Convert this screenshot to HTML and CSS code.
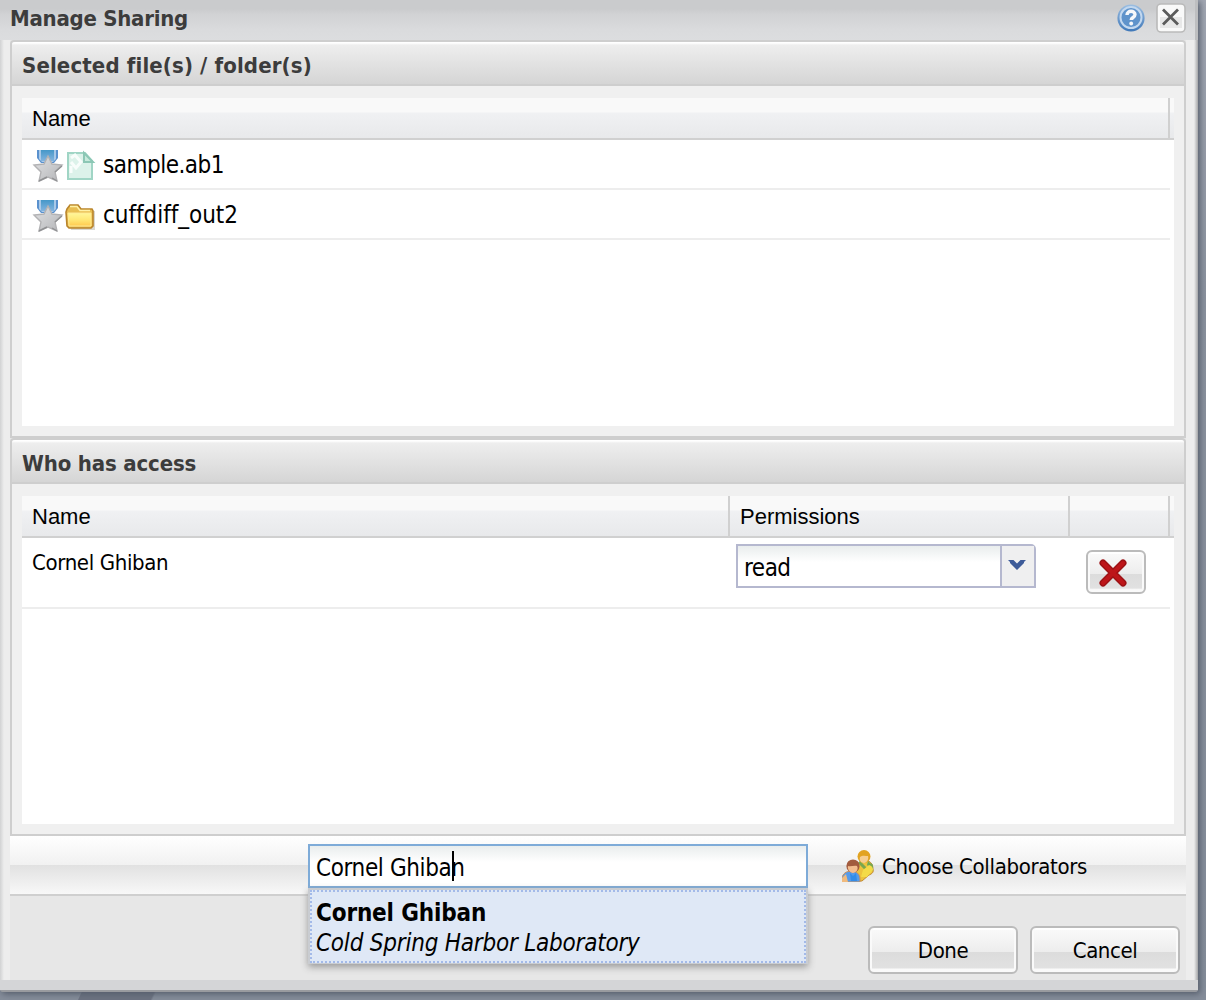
FILE: index.html
```html
<!DOCTYPE html>
<html lang="en">
<head>
<meta charset="utf-8">
<title>Manage Sharing</title>
<link rel="stylesheet" href="styles.css">
</head>
<body>
<svg class="defs" width="0" height="0" aria-hidden="true">
  <defs>
    <linearGradient id="silver" x1="0" y1="0" x2="1" y2="1"><stop offset="0" stop-color="#e2e2e4"/><stop offset=".5" stop-color="#cbccce"/><stop offset="1" stop-color="#b4b5b8"/></linearGradient>
    <linearGradient id="ribbon" x1="0" y1="0" x2="0" y2="1"><stop offset="0" stop-color="#4597c8"/><stop offset="1" stop-color="#83b4df"/></linearGradient>
    <linearGradient id="gold" x1="0" y1="0" x2="0" y2="1"><stop offset="0" stop-color="#fff79a"/><stop offset=".5" stop-color="#ffe877"/><stop offset="1" stop-color="#ffca4f"/></linearGradient>
    <linearGradient id="blue" x1="0" y1="0" x2="0" y2="1"><stop offset="0" stop-color="#9dbfe2"/><stop offset="1" stop-color="#3f78b9"/></linearGradient>
    <symbol id="medal" viewBox="0 0 32 32">
      <path d="M5 0h21v8l-4 5H9L5 8z" fill="#5a91ce"/>
      <path d="M7 0h17v9l-3 3H10L7 9z" fill="#a9c9e8"/>
      <path d="M9 0h13v11H9z" fill="url(#ribbon)"/>
      <path d="M16 6l4 8 10 1-7 7 2 9-9-4-9 4 2-9-7-7 10-1z" fill="url(#silver)" stroke="#b2b2b4" stroke-width="1.4"/>
      <path d="M7 31l8-4M25 31l-5-3M30 16l-7 6" fill="none" stroke="#909193" stroke-width="1.4"/>
    </symbol>
  </defs>
</svg>
<main class="window">
  <header class="titlebar">
    <h1 class="title">Manage Sharing</h1>
    <svg class="help" width="28" height="28" viewBox="0 0 28 28">
      <circle cx="14" cy="14" r="13.6" fill="url(#blue)"/>
      <circle cx="14" cy="13.500" r="10.500" fill="#5f93cb" stroke="#c3d8ef" stroke-width="2"/>
      <path d="M10 11c0-5 8-4.800 8-.4 0 3-3.800 2.800-3.800 5.400" fill="none" stroke="#f5f7fa" stroke-width="3.400"/>
      <circle cx="14.200" cy="19.500" r="1.900" fill="#f5f7fa"/>
    </svg>
    <svg class="close" width="30" height="30" viewBox="0 0 30 30">
      <rect x="1" y="1" width="28" height="28" rx="4" fill="#f9f9f9" stroke="#bababa" stroke-width="1.600"/>
      <path d="M4 14h22v11H4z" fill="#e8e8e8"/>
      <path d="M7 6.500l15 15M22 6.500l-15 15" stroke="#5c5c5c" stroke-width="2.800"/>
    </svg>
  </header>
  <div class="content">
    <section class="panel">
      <h2 class="panel-title files-title">Selected file(s) / folder(s)</h2>
      <div class="grid">
        <div class="columns"><div class="col col-full">Name</div></div>
        <div class="file-row">
          <svg width="32" height="32"><use href="#medal"/></svg>
          <svg width="32" height="32" viewBox="0 0 32 32">
            <path d="M4 3h17l7 8v18H4z" fill="#dcf2ea" stroke="#a0d5c5" stroke-width="2"/>
            <path d="M7 8l4-3 6 7-5 6-5-6M7 16v7" fill="none" stroke="#f8fdfb" stroke-width="3"/>
            <path d="M20 3v9h9z" fill="#c7eadc" stroke="#8cc7b5" stroke-width="2"/>
          </svg>
          <span class="file-name name-sample">sample.ab1</span>
        </div>
        <div class="file-row">
          <svg width="32" height="32"><use href="#medal"/></svg>
          <svg width="32" height="32" viewBox="0 0 32 32">
            <path d="M4 11h27v19H7z" fill="#b9b6ac" opacity=".55"/>
            <path d="M3 9l3-4h8l3 4h11l1 2v15l-2 2H5l-2-2-1-14z" fill="#e8be52" stroke="#b9852c" stroke-width="1.600"/>
            <path d="M6 6.500h7l3 4h10" fill="none" stroke="#fff1a5" stroke-width="1.400"/>
            <path d="M4 13h23v13H5z" fill="url(#gold)" stroke="#ffe994"/>
          </svg>
          <span class="file-name name-cuff">cuffdiff_out2</span>
        </div>
      </div>
    </section>
    <section class="panel">
      <h2 class="panel-title access-title">Who has access</h2>
      <div class="grid">
        <div class="columns">
          <div class="col col-name">Name</div>
          <div class="col col-perm">Permissions</div>
          <div class="col col-action"></div>
        </div>
        <div class="access-row">
          <div class="person">Cornel Ghiban</div>
          <div class="select">
            <span class="select-value">read</span>
            <span class="select-trigger"><svg width="18" height="12" viewBox="0 0 18 12"><path d="M0 1h5.500L9 4.500 12.500 1H18l-2 2v1L9 11 2 4V3z" fill="#3d5b99"/></svg></span>
          </div>
          <button class="button remove" aria-label="Remove">
            <svg width="32" height="32" viewBox="0 0 32 32">
              <path d="M6 6l20 20M26 6L6 26" stroke="#9c1114" stroke-width="7" stroke-linecap="round"/>
              <path d="M6 6l20 20M26 6L6 26" stroke="#bd1519" stroke-width="4" stroke-linecap="round"/>
            </svg>
          </button>
        </div>
      </div>
    </section>
    <div class="toolbar">
      <div class="search">
        <span class="search-value">Cornel Ghiban</span><i class="caret"></i>
        <div class="menu">
          <div class="option">
            <b class="option-name">Cornel Ghiban</b>
            <em class="option-place">Cold Spring Harbor Laboratory</em>
          </div>
        </div>
      </div>
      <div class="choose">
        <svg width="32" height="32" viewBox="0 0 32 32">
          <path d="M14 19c0-6 5-8 8-9 6 0 9 4 9 9 1 3-1 5-4 6l-7 6h-8z" fill="#edc33d" stroke="#c08b35"/>
          <path d="M26 11l5 5v5l-6-6z" fill="#73a853"/>
          <path d="M17 12l8 8 5-6" fill="none" stroke="#79a74f" stroke-width="3"/>
          <circle cx="22" cy="6.500" r="6.500" fill="#e2a322"/>
          <path d="M18 7c2-2 6-1 8-1 1 3-1 7-4 7s-5-3-4-6z" fill="#f6ce91"/>
          <path d="M21 20l6-5q4 1 4 5l-6 7h-6z" fill="#f4db48"/>
          <path d="M0 32v-5c2-5 6-6 10-6s8 3 8 8v3z" fill="#559bea" stroke="#cc905b"/>
          <path d="M0 28l4-4 2 8H0z" fill="#f0ba7d"/>
          <path d="M8 23l3 3 3-3 1 8H9z" fill="#328ce8"/>
          <circle cx="11" cy="16" r="6.600" fill="#a25b3e"/>
          <path d="M6 16c3 1 6-1 9 0 2 3-1 7-4 7s-6-4-5-7z" fill="#f3bd8f"/>
        </svg>
        <span class="choose-label">Choose Collaborators</span>
      </div>
    </div>
    <footer class="footer">
      <button class="button action">Done</button>
      <button class="button action cancel">Cancel</button>
    </footer>
  </div>
</main>
</body>
</html>
```
FILE: styles.css
```css
* { box-sizing: border-box; }
body {
  margin: 0;
  height: 1000px;
  overflow: hidden;
  color: #000;
  background: linear-gradient(115deg, transparent 74px, #6c7280 75px, #6c7280 140px, transparent 142px) 0 991px / 240px 9px no-repeat, linear-gradient(#a2a7b2, #8b929e 30%, #858d9a);
  font: 22px "DejaVu Sans Condensed", "DejaVu Sans", sans-serif;
  font-stretch: condensed;
}
svg { display: block; flex: none; }
.defs { position: absolute; }
.window {
  width: 1198px;
  height: 992px;
  background: linear-gradient(90deg, #d1d2d3, #ededed 4px, #ededed 1194px, #a5a6a8 1198px);
  border-radius: 0 0 3px 3px;
  box-shadow: 2px 2px 6px #555d6b;
  border-bottom: 2px solid #999b9f;
}
.window::after { content: ""; display: block; height: 10px; background: #d4d5d7; }
.titlebar {
  height: 40px;
  display: flex;
  align-items: flex-start;
  padding: 3px 9px 0 10px;
  background: linear-gradient(#cacbcd 0, #cacbcd 9px, #d1d2d4 14px, #dadbdd 30px, #dcdddf);
  border-right: 3px solid #bdbec0;
}
h1, h2 { margin: 0; color: #3c3c3c; font-weight: bold; font-size: 22px; }
.title { flex: 1; line-height: 32px; letter-spacing: -.25px; }
.help { margin: 1px 11px 0 0; }
.close { margin: 0; }
.content { width: 1176px; height: 940px; margin-left: 10px; background: #e7e7e7; }
.panel {
  height: 398px;
  background: #f0f0f0;
  border: 2px solid #cecece;
  border-radius: 4px 4px 0 0;
}
.panel-title {
  height: 44px;
  padding-left: 10px;
  line-height: 48px;
  background: linear-gradient(#fff 0, #fff 1px, #eee 3px, #d5d5d5 42px);
  border-bottom: 2px solid #cecece;
  border-radius: 3px 3px 0 0;
}
.files-title { letter-spacing: .13px; }
.access-title { letter-spacing: -.15px; }
.grid { margin: 12px 10px 0; height: 328px; background: #fff; }
.columns {
  height: 42px;
  display: flex;
  background: linear-gradient(#f9f9f9 0, #f9f9f9 14px, #f0f1f3 15px, #e8e9eb);
  border-bottom: 2px solid #d0d0d0;
  font: 22px/41px "Liberation Sans", Arial, sans-serif;
}
.col { padding-left: 10px; border-right: 2px solid #d0d0d0; }
.col-full { width: 1148px; }
.col-name { width: 708px; }
.col-perm { width: 340px; }
.col-action { width: 100px; }
.file-row {
  width: 1148px;
  height: 50px;
  display: flex;
  align-items: center;
  padding: 4px 0 0 10px;
  border-bottom: 2px solid #ededed;
}
.file-name { margin: -3px 0 0 7px; font-size: 24px; }
.name-sample { letter-spacing: -.5px; }
.name-cuff { letter-spacing: -.05px; }
.access-row {
  width: 1148px;
  height: 71px;
  display: flex;
  align-items: flex-start;
  padding: 6px 0 0 10px;
  border-bottom: 2px solid #ededed;
}
.person { width: 704px; line-height: 37px; letter-spacing: -.35px; }
.select {
  width: 300px;
  height: 44px;
  display: flex;
  border: 2px solid #b5b8cf;
  border-radius: 0 5px 0 0;
  background: linear-gradient(#e9eded, #fff 16px);
}
.select-value { width: 262px; padding-left: 6px; font-size: 24px; line-height: 44px; letter-spacing: -.5px; }
.select-trigger { flex: 1; padding: 13px 0 0 6px; border-left: 2px solid #b5b8cf; background: #efeff0; }
.button {
  display: flex;
  align-items: center;
  justify-content: center;
  padding: 0;
  border: 2px solid #bbb;
  border-radius: 6px;
  color: #000;
  font: inherit;
  background: linear-gradient(#fafafa 0, #ededed 54%, #dcdcdc 55%, #e1e1e1 90%, #fafafa 94%);
  box-shadow: inset 2px 0 #fafafa, inset -2px 0 #fafafa, inset 0 2px #fff;
}
.remove { width: 60px; height: 44px; margin: 6px 0 0 50px; padding: 2px 6px 0 0; }
.toolbar {
  height: 60px;
  display: flex;
  padding: 8px 0 0 298px;
  background: linear-gradient(#fff, #f1f1f1 29px, #e1e1e1 29px, #f8f8f8 58px);
  border-bottom: 2px solid #cfcfcf;
}
.search {
  position: relative;
  width: 500px;
  height: 44px;
  display: flex;
  padding-left: 6px;
  border: 2px solid #7eabd8;
  background: linear-gradient(#e9eded, #fff 16px);
  font-size: 24px;
  line-height: 44px;
}
.search-value { width: 148px; letter-spacing: -.38px; white-space: nowrap; }
.caret { width: 2px; height: 30px; margin: 5px 0 0 -12px; background: #000; }
.menu {
  position: absolute;
  top: 42px;
  left: -2px;
  width: 500px;
  height: 76px;
  padding: 2px 0 2px 2px;
  background: #c9ccd1;
  box-shadow: 0 3px 7px #999;
}
.option {
  height: 73px;
  width: 496px;
  padding: 6px 0 0 4px;
  border: 2px dotted #a3bae9;
  background: #dfe8f6;
  line-height: 30px;
}
.option b, .option em { display: block; white-space: nowrap; }
.option-name { letter-spacing: -.15px; }
.option-place { letter-spacing: -.22px; }
.choose { display: flex; align-items: center; height: 44px; gap: 8px; margin-left: 34px; }
.choose-label { letter-spacing: -.33px; }
.footer { height: 84px; display: flex; gap: 12px; padding: 30px 6px 0; justify-content: flex-end; }
.action { width: 150px; height: 48px; letter-spacing: -.45px; }
```
